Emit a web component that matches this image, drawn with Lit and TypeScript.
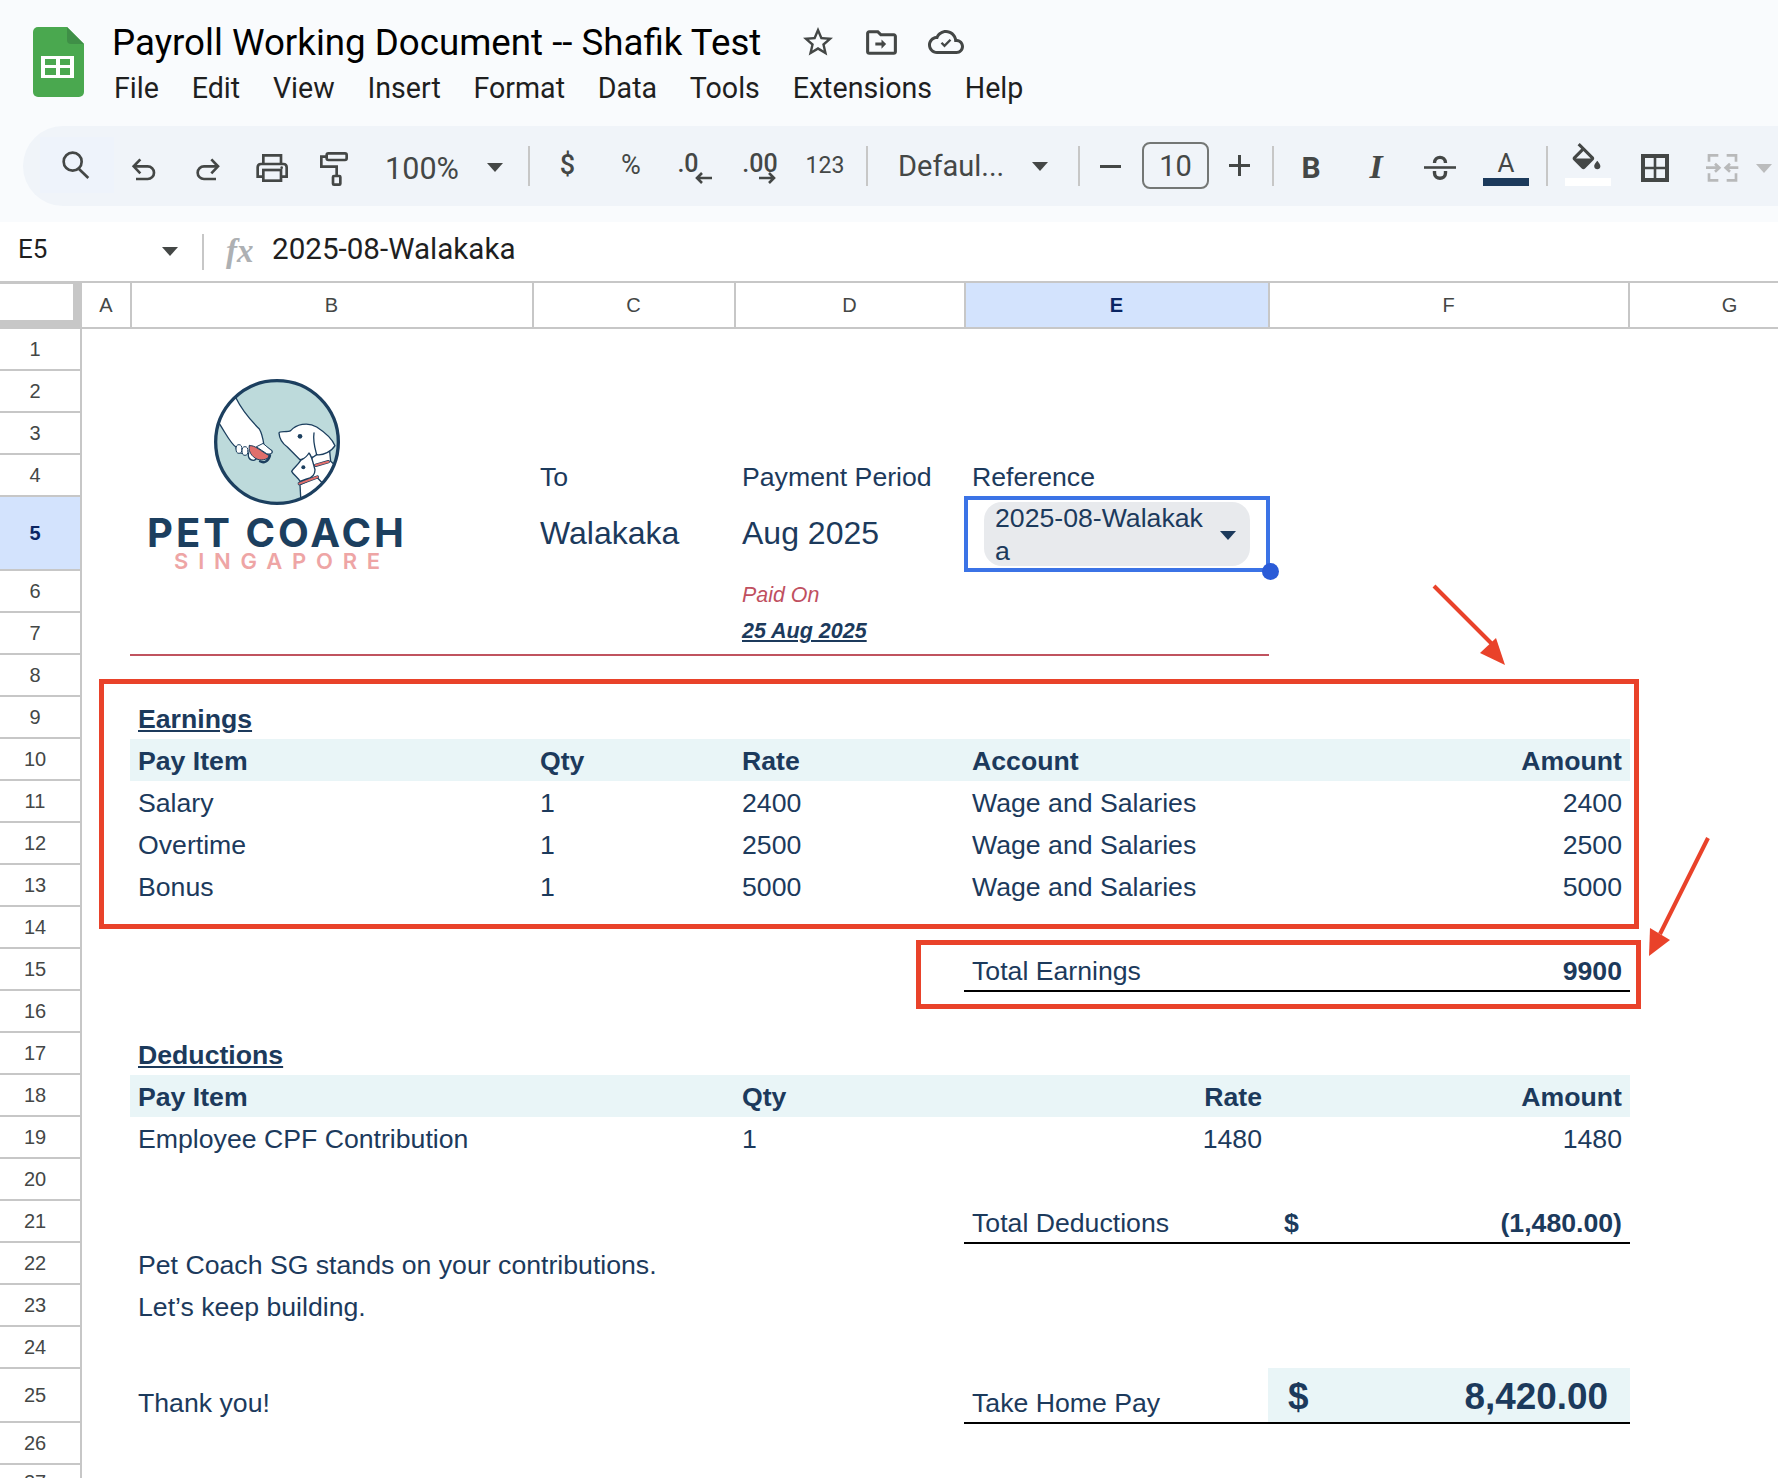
import { LitElement, html, css, unsafeCSS, TemplateResult } from 'lit'
import { customElement } from 'lit/decorators.js'

const ICON = '#444746'
const iconColor = unsafeCSS(ICON)

interface Tool {
  x: number
  y: number
  w: number
  h: number
  cls?: string
  body?: TemplateResult | string
}

const sep = (x: number): Tool => ({ x, y: 146, w: 2, h: 40, cls: 'sep' })
const caret = (x: number, y: number, cls = ''): Tool => ({ x, y, w: 16, h: 9, cls: `caret ${cls}` })

const TOOLS: Tool[] = [
  {
    x: 40, y: 137, w: 74, h: 56, cls: 'search',
    body: html`<svg width="32" height="32" viewBox="180 90 96 96" fill="none" stroke=${ICON} stroke-width="8">
      <circle cx="218" cy="128" r="27" /><path d="M237 150 L265 177" />
    </svg>`,
  },
  {
    x: 131, y: 157, w: 27, h: 25,
    body: html`<svg width="27" height="25" viewBox="393 111 81 75" fill="none" stroke=${ICON} stroke-width="8">
      <path d="M421 118 L401 139 L421 160" /><path d="M402 139 H443 A19 19 0 0 1 443 177 H408" />
    </svg>`,
  },
  {
    x: 195, y: 157, w: 27, h: 25,
    body: html`<svg width="27" height="25" viewBox="585 111 81 75" fill="none" stroke=${ICON} stroke-width="8">
      <path d="M634 118 L654 139 L634 160" /><path d="M653 139 H612 A19 19 0 0 0 612 177 H648" />
    </svg>`,
  },
  {
    x: 254, y: 152, w: 36, h: 32,
    body: html`<svg width="36" height="32" viewBox="762 96 108 96" fill="none" stroke=${ICON} stroke-width="8">
      <path d="M790 132 V106 H843 V132" />
      <path d="M790 170 H773 V142 Q773 132 783 132 H850 Q860 132 860 142 V170 H843" />
      <rect x="790" y="150" width="53" height="32" />
      <circle cx="845" cy="143" r="4" fill=${ICON} stroke="none" />
    </svg>`,
  },
  {
    x: 318, y: 150, w: 32, h: 38,
    body: html`<svg width="32" height="38" viewBox="954 90 96 114" fill="none" stroke=${ICON} stroke-width="8">
      <rect x="980" y="100" width="60" height="20" rx="5" />
      <path d="M980 110 H964 V140 H1010 V168" />
      <rect x="999" y="168" width="22" height="26" rx="3" />
    </svg>`,
  },
  { x: 384, y: 150, w: 76, h: 36, cls: 'txt zoom', body: '100%' },
  caret(487, 163),
  sep(528),
  { x: 555, y: 147, w: 25, h: 36, cls: 'txt mid', body: '$' },
  { x: 616, y: 147, w: 30, h: 36, cls: 'txt pct', body: '%' },
  { x: 676, y: 146, w: 24, h: 34, cls: 'txt small', body: '.0' },
  {
    x: 695, y: 172, w: 18, h: 12,
    body: html`<svg width="18" height="12" viewBox="0 0 18 12" fill="none" stroke=${ICON} stroke-width="2.6">
      <path d="M7 1 L2 6 L7 11 M2 6 H17" />
    </svg>`,
  },
  { x: 741, y: 146, w: 38, h: 34, cls: 'txt small', body: '.00' },
  {
    x: 758, y: 172, w: 18, h: 12,
    body: html`<svg width="18" height="12" viewBox="0 0 18 12" fill="none" stroke=${ICON} stroke-width="2.6">
      <path d="M11 1 L16 6 L11 11 M16 6 H1" />
    </svg>`,
  },
  { x: 804, y: 148, w: 42, h: 34, cls: 'txt num', body: '123' },
  sep(866),
  { x: 898, y: 148, w: 110, h: 36, cls: 'txt left', body: 'Defaul...' },
  caret(1032, 162),
  sep(1078),
  { x: 1100, y: 165, w: 21, h: 3, cls: 'bar' },
  { x: 1142, y: 142, w: 67, h: 47, cls: 'txt sizebox', body: '10' },
  {
    x: 1229, y: 155, w: 21, h: 21,
    body: html`<svg width="21" height="21" viewBox="0 0 21 21" stroke=${ICON} stroke-width="3">
      <path d="M0 10.5 H21 M10.5 0 V21" />
    </svg>`,
  },
  sep(1272),
  { x: 1299, y: 149, w: 24, h: 36, cls: 'txt bold', body: 'B' },
  { x: 1363, y: 149, w: 26, h: 36, cls: 'txt ital', body: 'I' },
  {
    x: 1424, y: 155, w: 32, h: 25,
    body: html`<svg width="32" height="25" viewBox="0 0 32 25" fill="none" stroke=${ICON}>
      <path d="M0 12.5 H32" stroke-width="2.6" />
      <path d="M10.5 8 C10.5 0.5 21.5 0.5 21.5 8" stroke-width="3.4" />
      <path d="M10.5 16 V18 C10.5 25 21.5 25 21.5 18 V16" stroke-width="3.4" />
    </svg>`,
  },
  {
    x: 1483, y: 149, w: 46, h: 37, cls: 'color',
    body: html`<span class="color-a">A</span><span class="color-bar"></span>`,
  },
  sep(1546),
  {
    x: 1565, y: 143, w: 46, h: 43, cls: 'fill',
    body: html`<svg width="37" height="35" viewBox="0 0 24 22.7" fill=${ICON}>
      <path d="M16.56 8.94L7.62 0 6.21 1.41l2.38 2.38-5.15 5.15c-.59.59-.59 1.54 0 2.12l5.5 5.5c.29.29.68.44 1.06.44s.77-.15 1.06-.44l5.5-5.5c.59-.58.59-1.53 0-2.12zM5.21 10L10 5.21 14.79 10H5.21zM19 11.5s-2 2.17-2 3.5c0 1.1.9 2 2 2s2-.9 2-2c0-1.33-2-3.5-2-3.5z" />
    </svg><span class="fill-bar"></span>`,
  },
  {
    x: 1639, y: 152, w: 32, h: 32,
    body: html`<svg width="32" height="32" viewBox="0 0 32 32" fill="none" stroke=${ICON}>
      <rect x="4" y="4" width="24" height="24" stroke-width="4" />
      <path d="M16 4 V28 M4 16 H28" stroke-width="2.6" />
    </svg>`,
  },
  {
    x: 1704, y: 152, w: 36, h: 32,
    body: html`<svg width="36" height="32" viewBox="612 96 108 96" fill="none" stroke="#b8b9ba" stroke-width="8">
      <path d="M655 106 H627 V125 M627 160 V181 H655 M680 106 H708 V125 M708 160 V181 H680" />
      <path d="M618 143 H655 M645 131 L658 143 L645 155 M715 143 H680 M690 131 L677 143 L690 155" />
    </svg>`,
  },
  caret(1756, 164, 'off'),
]

const COLS = ['A', 'B', 'C', 'D', 'E', 'F', 'G']

const col = (c: string) => COLS.indexOf(c) + 2

interface Cell {
  r: number
  c: string
  to?: string
  t?: string
  cls?: string
}

// row 7 and the total rows carry a rule, rows 10 and 18 a tinted band
const CELLS: Cell[] = [
  { r: 7, c: 'B', to: 'E', cls: 'rule red' },
  { r: 10, c: 'B', to: 'F', cls: 'band' },
  { r: 15, c: 'E', to: 'F', cls: 'rule' },
  { r: 18, c: 'B', to: 'F', cls: 'band' },
  { r: 21, c: 'E', to: 'F', cls: 'rule' },
  { r: 25, c: 'F', cls: 'band-total' },
  { r: 25, c: 'E', to: 'F', cls: 'rule' },

  { r: 4, c: 'C', t: 'To' },
  { r: 4, c: 'D', t: 'Payment Period' },
  { r: 4, c: 'E', t: 'Reference' },
  { r: 5, c: 'C', t: 'Walakaka', cls: 'lead' },
  { r: 5, c: 'D', t: 'Aug 2025', cls: 'lead' },
  { r: 6, c: 'D', t: 'Paid On', cls: 'paid' },
  { r: 7, c: 'D', t: '25 Aug 2025', cls: 'paid-date' },

  { r: 9, c: 'B', t: 'Earnings', cls: 'heading' },
  { r: 10, c: 'B', t: 'Pay Item', cls: 'b' },
  { r: 10, c: 'C', t: 'Qty', cls: 'b' },
  { r: 10, c: 'D', t: 'Rate', cls: 'b' },
  { r: 10, c: 'E', t: 'Account', cls: 'b' },
  { r: 10, c: 'F', t: 'Amount', cls: 'b right' },
  { r: 11, c: 'B', t: 'Salary' },
  { r: 11, c: 'C', t: '1' },
  { r: 11, c: 'D', t: '2400' },
  { r: 11, c: 'E', t: 'Wage and Salaries' },
  { r: 11, c: 'F', t: '2400', cls: 'right' },
  { r: 12, c: 'B', t: 'Overtime' },
  { r: 12, c: 'C', t: '1' },
  { r: 12, c: 'D', t: '2500' },
  { r: 12, c: 'E', t: 'Wage and Salaries' },
  { r: 12, c: 'F', t: '2500', cls: 'right' },
  { r: 13, c: 'B', t: 'Bonus' },
  { r: 13, c: 'C', t: '1' },
  { r: 13, c: 'D', t: '5000' },
  { r: 13, c: 'E', t: 'Wage and Salaries' },
  { r: 13, c: 'F', t: '5000', cls: 'right' },
  { r: 15, c: 'E', t: 'Total Earnings' },
  { r: 15, c: 'F', t: '9900', cls: 'b right' },

  { r: 17, c: 'B', t: 'Deductions', cls: 'heading' },
  { r: 18, c: 'B', t: 'Pay Item', cls: 'b' },
  { r: 18, c: 'D', t: 'Qty', cls: 'b' },
  { r: 18, c: 'E', t: 'Rate', cls: 'b right' },
  { r: 18, c: 'F', t: 'Amount', cls: 'b right' },
  { r: 19, c: 'B', t: 'Employee CPF Contribution' },
  { r: 19, c: 'D', t: '1' },
  { r: 19, c: 'E', t: '1480', cls: 'right' },
  { r: 19, c: 'F', t: '1480', cls: 'right' },
  { r: 21, c: 'E', t: 'Total Deductions' },
  { r: 21, c: 'F', t: '$', cls: 'b acct' },
  { r: 21, c: 'F', t: '(1,480.00)', cls: 'b right' },

  { r: 22, c: 'B', to: 'C', t: 'Pet Coach SG stands on your contributions.' },
  { r: 23, c: 'B', to: 'C', t: 'Let’s keep building.' },
  { r: 25, c: 'B', t: 'Thank you!' },
  { r: 25, c: 'E', t: 'Take Home Pay' },
  { r: 25, c: 'F', t: '$', cls: 'take acct-big' },
  { r: 25, c: 'F', t: '8,420.00', cls: 'take take-amt' },
]

@customElement('app-root')
export class AppRoot extends LitElement {
  static styles = css`
    :host {
      display: block;
      position: relative;
      width: 1778px;
      height: 1478px;
      overflow: hidden;
      background: #fff;
      font-family: 'Liberation Sans', Arial, sans-serif;
    }
    svg {
      display: block;
    }

    /* app chrome */
    .chrome {
      height: 222px;
      background: #f9fbfd;
      font-family: Roboto, 'Noto Sans', sans-serif;
      color: #1f1f1f;
      box-sizing: border-box;
      overflow: hidden;
    }
    .top {
      display: flex;
      align-items: flex-start;
      height: 126px;
      box-sizing: border-box;
      padding: 27px 0 0 33px;
    }
    .titles {
      margin: -3px 0 0 28px;
    }
    .title-row {
      display: flex;
      align-items: center;
      height: 36px;
    }
    .title {
      width: 688px;
      font-size: 36.7px;
      white-space: nowrap;
      color: #000;
    }
    .folder {
      margin-left: 27px;
    }
    .cloud {
      margin-left: 28px;
    }
    .menu {
      display: flex;
      gap: 32.8px;
      margin: 10px 0 0 2px;
      height: 36px;
      align-items: center;
      font-size: 28.6px;
      color: #1f1f1f;
    }
    .toolbar {
      display: flex;
      align-items: flex-start;
      height: 80px;
      margin-left: 23px;
      border-radius: 40px 0 0 40px;
      background: #f0f4f9;
      color: ${iconColor};
    }
    .tool {
      flex: none;
      box-sizing: border-box;
      display: flex;
      align-items: center;
      justify-content: center;
      white-space: nowrap;
    }
    .search {
      background: #eef3fb;
      padding-right: 3px;
    }
    .sep {
      background: #c7c7c7;
    }
    .bar {
      background: ${iconColor};
    }
    .caret {
      width: 0;
      height: 0;
      border-left: 8px solid transparent;
      border-right: 8px solid transparent;
      border-top: 9px solid ${iconColor};
    }
    .caret.off {
      border-top-color: #bbbcbd;
    }
    .txt {
      font-size: 29px;
    }
    .txt.zoom {
      font-size: 30.5px;
    }
    .txt.mid {
      font-size: 27px;
      font-weight: 500;
    }
    .txt.pct {
      font-size: 27px;
    }
    .txt.small {
      font-size: 25px;
      font-weight: 500;
    }
    .txt.num {
      font-size: 23px;
    }
    .txt.left {
      justify-content: flex-start;
    }
    .txt.bold {
      font-size: 30px;
      font-weight: 700;
    }
    .txt.ital {
      font-family: 'Liberation Serif', serif;
      font-style: italic;
      font-weight: 700;
      font-size: 34px;
    }
    .sizebox {
      border: 2px solid #747775;
      border-radius: 8px;
    }
    .color {
      flex-direction: column;
      justify-content: flex-start;
    }
    .color-a {
      height: 29px;
      line-height: 29px;
      font-size: 26px;
    }
    .color-bar {
      width: 46px;
      height: 8px;
      background: #1c3a5c;
    }
    .fill {
      flex-direction: column;
      align-items: flex-start;
      justify-content: flex-start;
    }
    .fill svg {
      margin-left: 3px;
    }
    .fill-bar {
      width: 46px;
      height: 8px;
      background: #fff;
    }

    /* formula bar */
    .formula {
      display: flex;
      align-items: center;
      height: 59px;
      padding-bottom: 5px;
      box-sizing: border-box;
      font-family: Roboto, sans-serif;
      font-size: 29.6px;
      color: #1f1f1f;
    }
    .namebox {
      width: 144px;
      margin-left: 18px;
      font-size: 26px;
    }
    .formula .caret {
      margin-right: 24px;
      margin-top: 4px;
    }
    .divider {
      width: 2px;
      height: 36px;
      margin-top: 5px;
      background: #c7c7c7;
    }
    .fx {
      width: 46px;
      margin-left: 22px;
      padding-top: 5px;
      font-family: 'Liberation Serif', serif;
      font-style: italic;
      font-weight: 700;
      font-size: 33px;
      color: #adb0b3;
    }

    /* sheet grid */
    .sheet {
      display: grid;
      grid-template-columns: 82px 49px 402px 202px 230px 304px 360px 149px;
      grid-template-rows: 48px repeat(4, 42px) 74px repeat(19, 42px) 54px 42px 13px;
      color: #1c3a5c;
      font-size: 26.67px;
    }
    .corner {
      box-sizing: border-box;
      grid-area: 1 / 1;
      background: #fff;
      border-top: 3px solid #c7c7c7;
      border-right: 9px solid #c7c7c7;
      border-bottom: 9px solid #c7c7c7;
    }
    .col-head,
    .row-head {
      box-sizing: border-box;
      display: flex;
      align-items: center;
      justify-content: center;
      font-size: 20px;
      color: #444746;
    }
    .col-head {
      z-index: 1;
      margin-right: -1px;
      border-top: 2px solid #c7c7c7;
      border-bottom: 2px solid #c7c7c7;
      border-right: 2px solid #c7c7c7;
    }
    .col-head.g {
      margin-right: 0;
      border-right: 0;
      padding-left: 52px;
    }
    .row-head {
      grid-column: 1;
      border-right: 2px solid #c7c7c7;
      border-bottom: 2px solid #c7c7c7;
      padding-right: 10px;
      overflow: hidden;
    }
    .row-head.last {
      align-items: flex-start;
      line-height: 34px;
      border-bottom: 0;
    }
    .sel {
      background: #d3e3fd;
      color: #0a2563;
      font-weight: 700;
    }
    .col-head.sel {
      z-index: 0;
    }
    .cell {
      display: flex;
      align-items: flex-end;
      box-sizing: border-box;
      padding: 0 7px;
      line-height: 40px;
      white-space: nowrap;
      min-width: 0;
    }
    .b {
      font-weight: 700;
    }
    .right {
      justify-content: flex-end;
    }
    .heading {
      font-weight: 700;
      text-decoration: underline;
    }
    .lead {
      align-items: center;
      padding-bottom: 2px;
      font-size: 32px;
    }
    .paid {
      font-size: 21.4px;
      font-style: italic;
      color: #c0505f;
      line-height: 36px;
    }
    .paid-date {
      font-size: 21.5px;
      font-style: italic;
      font-weight: 700;
      text-decoration: underline;
      line-height: 48px;
    }
    .band {
      background: #e9f5f7;
      margin-left: -1px;
      margin-right: -1px;
    }
    .band-total {
      background: #e9f5f7;
      margin: -1px -1px 0 -1px;
    }
    .rule {
      border-bottom: 2px solid #000;
      margin: 0 -1px -1px -1px;
    }
    .rule.red {
      border-bottom-color: #c0535f;
      margin-right: 0;
    }
    .acct {
      padding-left: 15px;
    }
    .take {
      align-items: center;
      padding-top: 2px;
      font-weight: 700;
      font-size: 36.9px;
    }
    .acct-big {
      padding-left: 19px;
    }
    .take-amt {
      justify-content: flex-end;
      padding-right: 21px;
    }

    /* selected cell with its dropdown chip */
    .picked {
      position: relative;
      grid-area: 6 / 6;
      box-sizing: border-box;
      margin: -1px -1px -1px -1px;
      border: 4px solid #3b73e6;
      padding: 2px 16px 2px 16px;
    }
    .chip {
      display: flex;
      align-items: center;
      height: 100%;
      box-sizing: border-box;
      padding: 2px 0 0 11px;
      border-radius: 18px;
      background: #e8eaed;
      font-size: 26.67px;
      line-height: 33px;
    }
    .chip-text {
      width: 218px;
      word-break: break-all;
    }
    .chip-arrow {
      margin-left: 7px;
      border-left: 8px solid transparent;
      border-right: 8px solid transparent;
      border-top: 9px solid #1c3a5c;
    }
    .handle {
      position: absolute;
      right: -13px;
      bottom: -12px;
      width: 17px;
      height: 17px;
      border-radius: 50%;
      background: #2a5bd7;
    }

    /* logo */
    .logo {
      grid-area: 2 / 3 / 8 / 3;
      display: flex;
      flex-direction: column;
      align-items: center;
      width: 254px;
      margin-left: 19px;
      padding-top: 48px;
      font-family: Inter, sans-serif;
    }
    .logo-name {
      margin-top: 10px;
      height: 32px;
      line-height: 32px;
      font-size: 40px;
      font-weight: 700;
      letter-spacing: 3px;
      white-space: nowrap;
      color: #1c3f5f;
    }
    .logo-sub {
      margin: 3px -10px 0 0;
      height: 18px;
      line-height: 18px;
      font-size: 22px;
      font-weight: 600;
      letter-spacing: 9.8px;
      white-space: nowrap;
      color: #eea5a5;
    }

    /* review marks drawn on top of the sheet */
    .marks {
      position: absolute;
      left: 0;
      top: 0;
      pointer-events: none;
    }
  `

  private renderTools() {
    let right = 23
    return TOOLS.map((t) => {
      const left = t.x - right
      right = t.x + t.w
      return html`<div
        class="tool ${t.cls ?? ''}"
        style="margin-left:${left}px;margin-top:${t.y - 126}px;width:${t.w}px;height:${t.h}px"
      >${t.body ?? ''}</div>`
    })
  }

  private renderLogo() {
    return html`<div class="logo">
      <svg width="130" height="130" viewBox="36 22 390 390">
        <defs><clipPath id="disc"><circle cx="231" cy="217" r="184" /></clipPath></defs>
        <circle cx="231" cy="217" r="184" fill="#bddadb" />
        <g clip-path="url(#disc)" stroke="#1c3f5f" stroke-width="4" stroke-linejoin="round" stroke-linecap="round">
          <path fill="#fff" d="M108 85 C125 120 150 150 178 178 C188 195 190 215 192 228 L215 243 C219 251 210 255 200 252 L178 246 C172 262 170 272 160 272 C147 272 143 260 146 250 C128 256 108 248 108 232 C95 225 85 205 60 165 L20 110 Z" />
          <path fill="#e06f6c" stroke-width="3" d="M148 228 C165 225 182 245 208 258 C205 270 180 276 165 265 C150 255 145 240 148 228 Z" />
          <path fill="none" d="M180 275 C192 282 205 275 210 258" stroke-width="7" />
          <path fill="#fff" stroke-width="3" d="M190 222 L215 243 C219 251 210 255 200 252 L170 232 Z" />
          <ellipse cx="117" cy="238" rx="9" ry="13" fill="#fff" stroke-width="3" />
          <ellipse cx="135" cy="244" rx="9" ry="13" fill="#fff" stroke-width="3" />
          <path fill="#fff" d="M340 250 L388 235 L392 275 L420 300 L360 350 L320 330 Z" />
          <path fill="#fff" d="M237 190 C238 183 262 189 272 183 C288 165 322 155 350 172 C375 188 395 205 405 228 C395 245 370 258 350 255 L340 262 L300 270 L262 232 C248 222 238 205 237 190 Z" />
          <path fill="none" d="M342 190 C338 215 346 240 350 255" />
          <circle cx="300" cy="200" r="7" fill="#1c3f5f" stroke="none" />
          <path d="M347 287 L385 276" stroke-width="10" />
          <path d="M347 287 L385 276" stroke="#e06f6c" stroke-width="6" />
          <path fill="#fff" d="M300 345 L303 400 L345 400 L372 345 L350 322 Z" />
          <path fill="#fff" d="M275 305 C280 295 295 285 302 272 C310 268 320 262 327 250 C337 262 340 285 345 300 C345 315 335 325 320 328 L300 335 C295 325 280 315 275 305 Z" />
          <circle cx="310" cy="293" r="6" fill="#1c3f5f" stroke="none" />
          <path d="M298 342 L352 322" stroke-width="10" />
          <path d="M298 342 L352 322" stroke="#e06f6c" stroke-width="6" />
        </g>
        <circle cx="231" cy="217" r="184" fill="none" stroke="#1c3f5f" stroke-width="10" />
      </svg>
      <div class="logo-name">PET COACH</div>
      <div class="logo-sub">SINGAPORE</div>
    </div>`
  }

  private renderCell(c: Cell) {
    const area = `${c.r + 1} / ${col(c.c)} / ${c.r + 2} / ${col(c.to ?? c.c) + 1}`
    return html`<div class="cell ${c.cls ?? ''}" style="grid-area:${area}">${c.t ? html`<span>${c.t}</span>` : ''}</div>`
  }

  render() {
    const rows = Array.from({ length: 27 }, (_, i) => i + 1)
    return html`
      <div class="chrome">
        <div class="top">
          <svg width="51" height="70" viewBox="0 0 51 70">
            <path fill="#4aa84f" d="M5 0 H34 L51 17 V65 A5 5 0 0 1 46 70 H5 A5 5 0 0 1 0 65 V5 A5 5 0 0 1 5 0 Z" />
            <path fill="#3f8f47" d="M34 0 L51 17 H38 A4 4 0 0 1 34 13 Z" />
            <path fill="#fff" d="M8 29 H41 V51 H8 Z" />
            <path fill="#4aa84f" d="M12 32 H23 V38 H12 Z M27 32 H37 V38 H27 Z M12 41 H23 V48 H12 Z M27 41 H37 V48 H27 Z" />
          </svg>
          <div class="titles">
            <div class="title-row">
              <span class="title">Payroll Working Document -- Shafik Test</span>
              <svg width="36" height="36" viewBox="0 0 24 24" fill=${ICON}>
                <path d="M22 9.24l-7.19-.62L12 2 9.19 8.63 2 9.24l5.46 4.73L5.82 21 12 17.27 18.18 21l-1.63-7.03L22 9.24zM12 15.4l-3.76 2.27 1-4.28-3.32-2.88 4.38-.38L12 6.1l1.71 4.04 4.38.38-3.32 2.88 1 4.28L12 15.4z" />
              </svg>
              <svg class="folder" width="37" height="37" viewBox="0 0 24 24" fill=${ICON}>
                <path d="M20 6h-8l-2-2H4c-1.1 0-1.99.9-1.99 2L2 18c0 1.1.9 2 2 2h16c1.1 0 2-.9 2-2V8c0-1.1-.9-2-2-2zm0 12H4V6h5.17l2 2H20v10z" />
                <path d="M12 12H8v2h4v2l3-3-3-3z" />
              </svg>
              <svg class="cloud" width="36" height="36" viewBox="0 0 24 24" fill=${ICON}>
                <path d="M19.35 10.04C18.67 6.59 15.64 4 12 4 9.11 4 6.6 5.64 5.35 8.04 2.34 8.36 0 10.91 0 14c0 3.31 2.69 6 6 6h13c2.76 0 5-2.24 5-5 0-2.64-2.05-4.78-4.65-4.96zM19 18H6c-2.21 0-4-1.79-4-4s1.79-4 4-4h.71C7.37 7.69 9.48 6 12 6c3.04 0 5.5 2.46 5.5 5.5v.5H19c1.66 0 3 1.34 3 3s-1.34 3-3 3z" />
                <path d="M9 12.5 L11 14.5 L15 10.5" fill="none" stroke=${ICON} stroke-width="1.6" />
              </svg>
            </div>
            <div class="menu">
              ${['File', 'Edit', 'View', 'Insert', 'Format', 'Data', 'Tools', 'Extensions', 'Help'].map((m) => html`<span>${m}</span>`)}
            </div>
          </div>
        </div>
        <div class="toolbar">${this.renderTools()}</div>
      </div>

      <div class="formula">
        <span class="namebox">E5</span>
        <span class="caret"></span>
        <span class="divider"></span>
        <span class="fx">fx</span>
        <span>2025-08-Walakaka</span>
      </div>

      <div class="sheet">
        <div class="corner"></div>
        ${COLS.map((c) => html`<div class="col-head ${c === 'E' ? 'sel' : ''} ${c === 'G' ? 'g' : ''}">${c}</div>`)}
        ${rows.map(
          (r) => html`<div class="row-head ${r === 5 ? 'sel' : ''} ${r === 27 ? 'last' : ''}" style="grid-row:${r + 1}">${r}</div>`,
        )}
        ${this.renderLogo()}
        ${CELLS.map((c) => this.renderCell(c))}
        <div class="picked">
          <div class="chip">
            <span class="chip-text">2025-08-Walakaka</span>
            <span class="chip-arrow"></span>
          </div>
          <span class="handle"></span>
        </div>
      </div>

      <svg class="marks" width="1778" height="1478" viewBox="0 0 1778 1478" fill="none" stroke="#e9422a">
        <rect x="101.5" y="681.5" width="1535" height="245" stroke-width="5" />
        <rect x="918.5" y="942.5" width="720" height="64" stroke-width="5" />
        <path d="M1434 586 L1494 646" stroke-width="4" />
        <path d="M1505 665 L1496 638 L1480 653 Z" fill="#e9422a" stroke="none" />
        <path d="M1708 838 L1660 934" stroke-width="4" />
        <path d="M1649 956 L1670 940 L1650 928 Z" fill="#e9422a" stroke="none" />
      </svg>
    `
  }
}

declare global {
  interface HTMLElementTagNameMap {
    'app-root': AppRoot
  }
}
